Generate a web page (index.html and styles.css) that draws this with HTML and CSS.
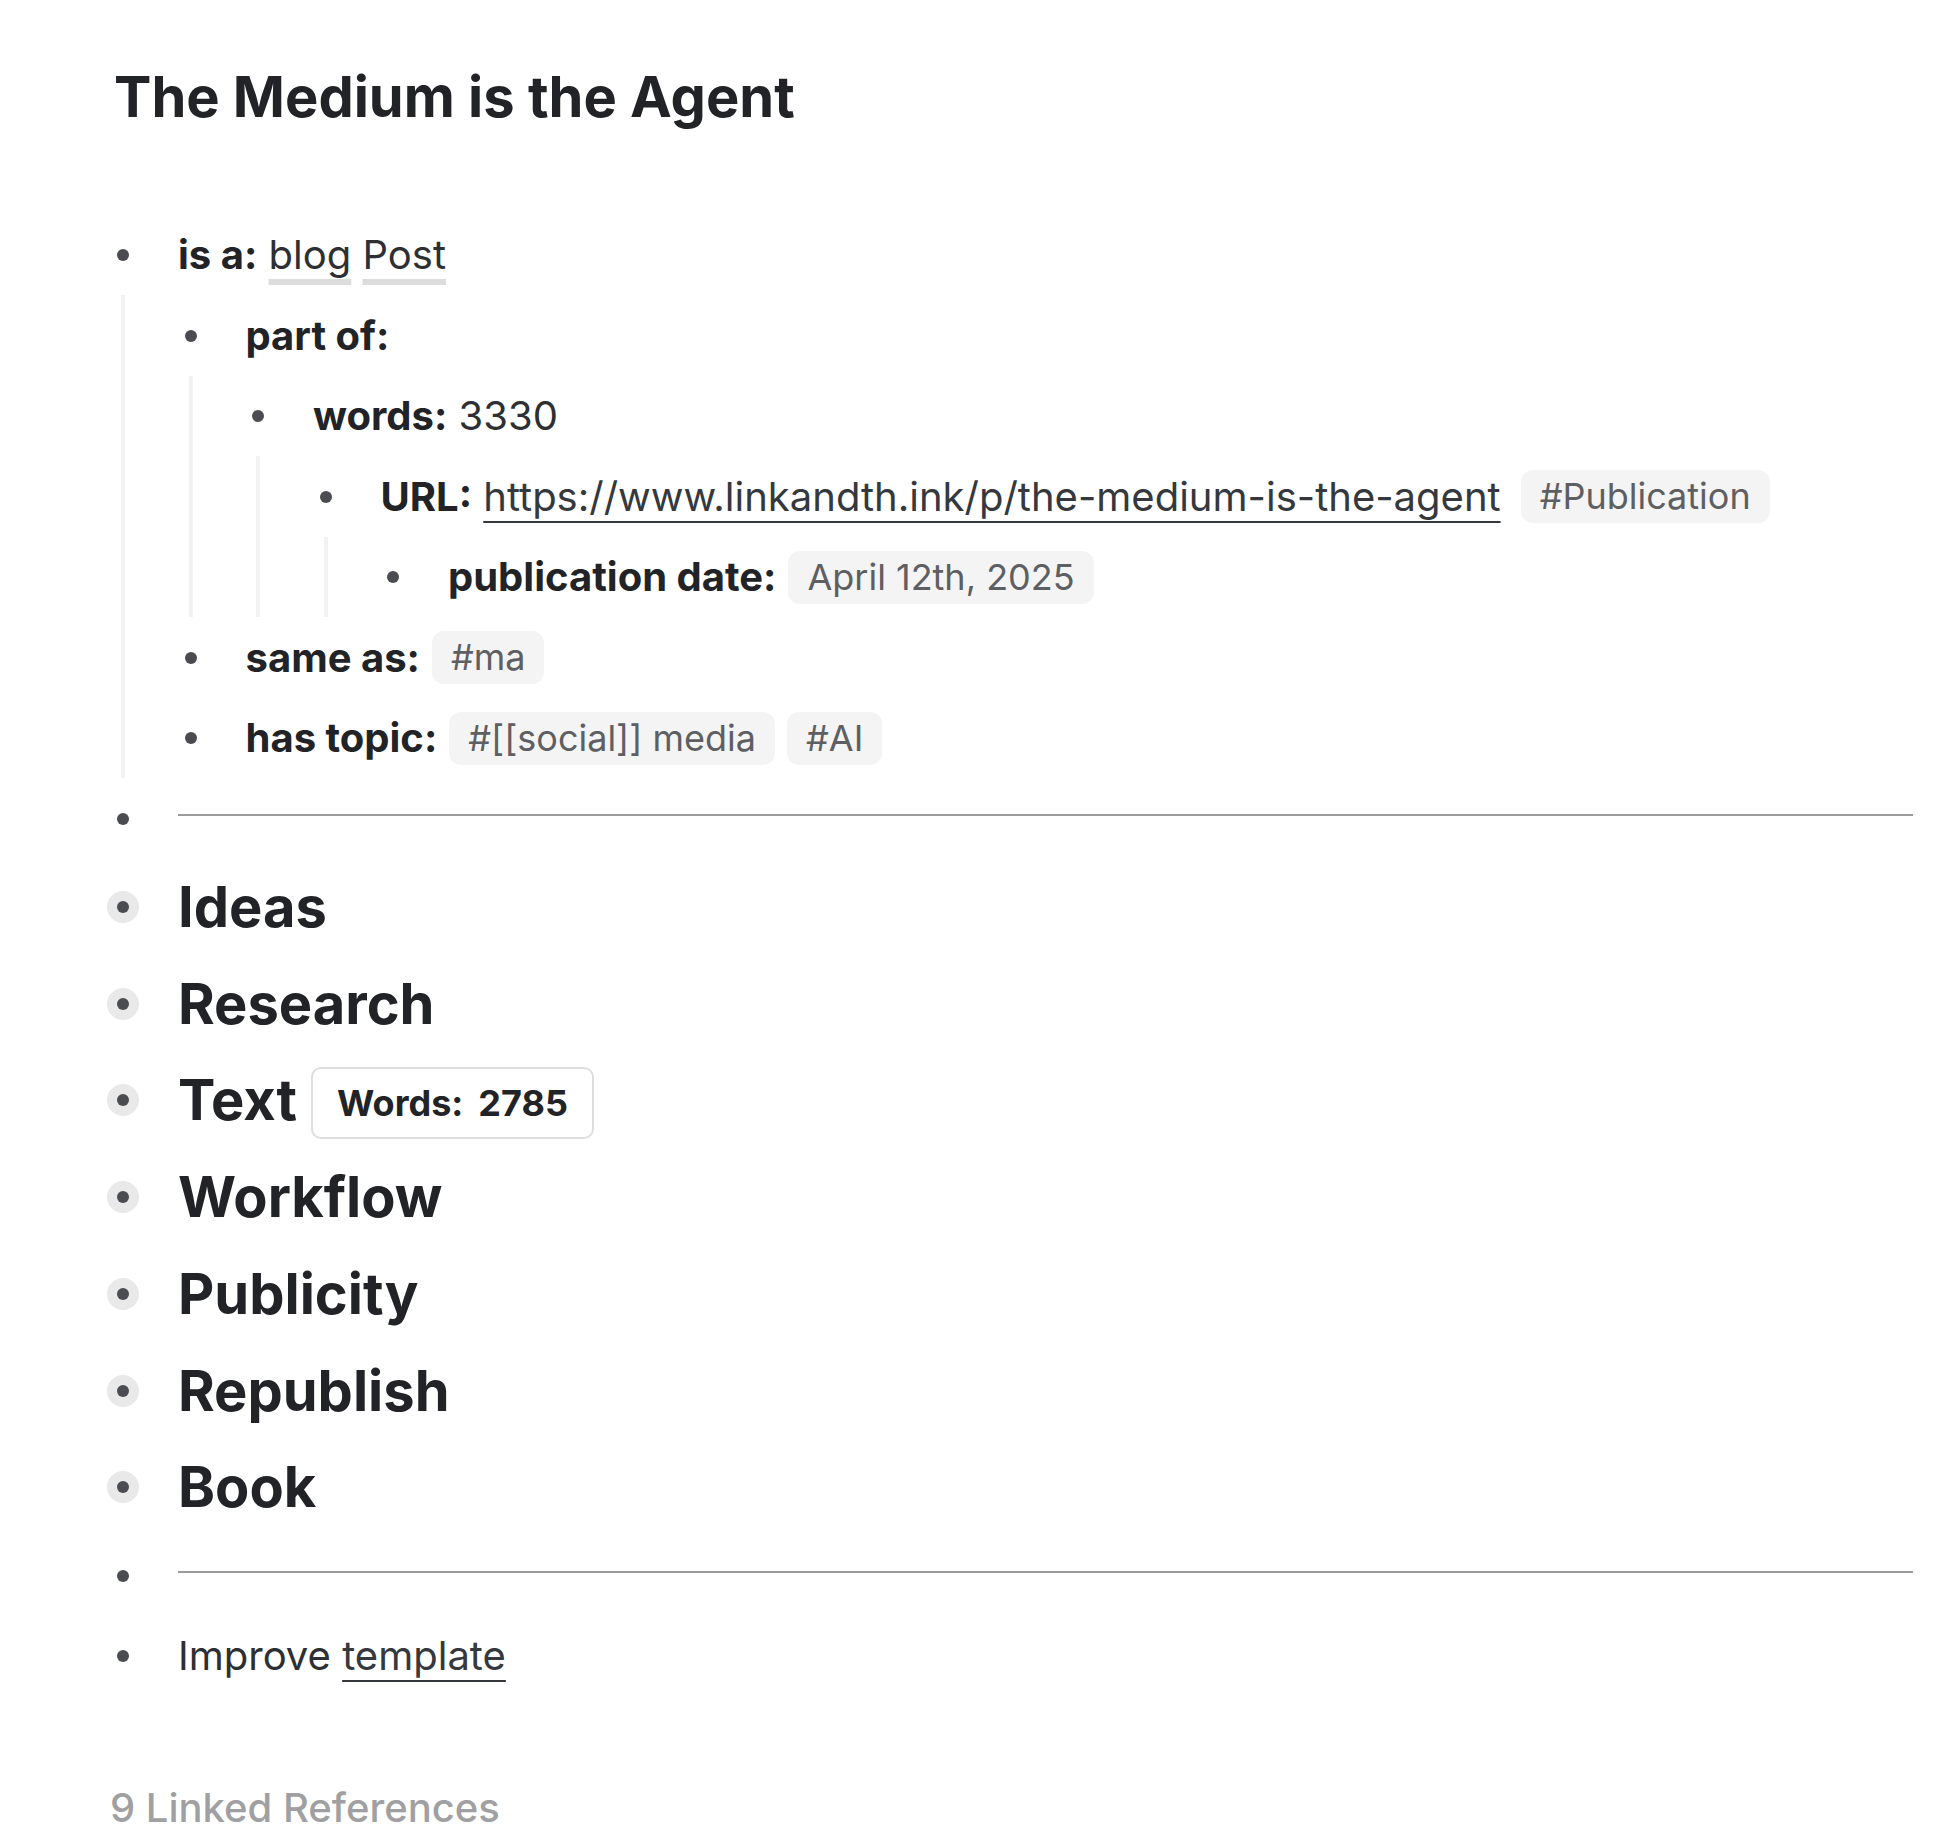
FILE: index.html
```html
<!DOCTYPE html>
<html lang="en">
<head>
<meta charset="utf-8">
<title>The Medium is the Agent</title>
<link rel="stylesheet" href="styles.css">
</head>
<body>
<div class="page">
  <h1 class="title">The Medium is the Agent</h1>

  <div class="blocks">
    <div class="block">
      <div class="row">
        <span class="bullet"><span class="dot"></span></span>
        <div class="content"><span class="line"><span class="key">is a:</span> <span class="ref">blog</span> <span class="ref">Post</span></span></div>
      </div>
      <div class="children">
        <div class="block">
          <div class="row">
            <span class="bullet"><span class="dot"></span></span>
            <div class="content"><span class="line"><span class="key">part of:</span></span></div>
          </div>
          <div class="children">
            <div class="block">
              <div class="row">
                <span class="bullet"><span class="dot"></span></span>
                <div class="content"><span class="line"><span class="key">words:</span> <span class="val">3330</span></span></div>
              </div>
              <div class="children">
                <div class="block">
                  <div class="row">
                    <span class="bullet"><span class="dot"></span></span>
                    <div class="content"><span class="line"><span class="key">URL:</span> <span class="link">https://www.linkandth.ink/p/the-medium-is-the-agent</span><span class="tag tag-wide">#Publication</span></span></div>
                  </div>
                  <div class="children">
                    <div class="block">
                      <div class="row">
                        <span class="bullet"><span class="dot"></span></span>
                        <div class="content"><span class="line"><span class="key">publication date:</span><span class="tag">April 12th, 2025</span></span></div>
                      </div>
                    </div>
                  </div>
                </div>
              </div>
            </div>
          </div>
        </div>
        <div class="block">
          <div class="row">
            <span class="bullet"><span class="dot"></span></span>
            <div class="content"><span class="line"><span class="key">same as:</span><span class="tag">#ma</span></span></div>
          </div>
        </div>
        <div class="block">
          <div class="row">
            <span class="bullet"><span class="dot"></span></span>
            <div class="content"><span class="line"><span class="key">has topic:</span><span class="tag">#[[social]] media</span><span class="tag">#AI</span></span></div>
          </div>
        </div>
      </div>
    </div>

    <div class="block">
      <div class="row">
        <span class="bullet"><span class="dot"></span></span>
        <div class="content"><div class="rule"></div></div>
      </div>
    </div>

    <div class="block collapsed">
      <div class="row heading-row">
        <span class="bullet"><span class="ring"><span class="dot"></span></span></span>
        <div class="content"><span class="heading">Ideas</span></div>
      </div>
    </div>
    <div class="block collapsed">
      <div class="row heading-row">
        <span class="bullet"><span class="ring"><span class="dot"></span></span></span>
        <div class="content"><span class="heading">Research</span></div>
      </div>
    </div>
    <div class="block collapsed">
      <div class="row heading-row">
        <span class="bullet"><span class="ring"><span class="dot"></span></span></span>
        <div class="content"><span class="heading">Text</span><span class="counter"><span>Words:</span><span>2785</span></span></div>
      </div>
    </div>
    <div class="block collapsed">
      <div class="row heading-row">
        <span class="bullet"><span class="ring"><span class="dot"></span></span></span>
        <div class="content"><span class="heading">Workflow</span></div>
      </div>
    </div>
    <div class="block collapsed">
      <div class="row heading-row">
        <span class="bullet"><span class="ring"><span class="dot"></span></span></span>
        <div class="content"><span class="heading">Publicity</span></div>
      </div>
    </div>
    <div class="block collapsed">
      <div class="row heading-row">
        <span class="bullet"><span class="ring"><span class="dot"></span></span></span>
        <div class="content"><span class="heading">Republish</span></div>
      </div>
    </div>
    <div class="block collapsed">
      <div class="row heading-row">
        <span class="bullet"><span class="ring"><span class="dot"></span></span></span>
        <div class="content"><span class="heading">Book</span></div>
      </div>
    </div>

    <div class="block">
      <div class="row">
        <span class="bullet"><span class="dot"></span></span>
        <div class="content"><div class="rule"></div></div>
      </div>
    </div>

    <div class="block">
      <div class="row">
        <span class="bullet"><span class="dot"></span></span>
        <div class="content"><span class="line"><span class="val">Improve</span> <span class="link">template</span></span></div>
      </div>
    </div>
  </div>

  <div class="refs">9 Linked References</div>
</div>
</body>
</html>
```

FILE: styles.css
```css
* { box-sizing: border-box; }

html, body {
  margin: 0;
  padding: 0;
  background: #ffffff;
}

body {
  font-family: Inter, "Noto Sans", "Liberation Sans", sans-serif;
  color: #222326;
}

.page {
  padding: 63px 38px 0 99px;
}

.title {
  margin: 0 0 0 15px;
  font-size: 56px;
  line-height: 68px;
  font-weight: 700;
  color: #222326;
}

.blocks {
  margin-top: 83.75px;
}

.row {
  display: flex;
  align-items: center;
  min-height: 80.5px;
}

.heading-row {
  min-height: 96.7px;
}

.bullet {
  flex: none;
  width: 48px;
  height: 48px;
  margin-right: 31px;
  display: flex;
  align-items: center;
  justify-content: center;
}

.dot {
  display: block;
  width: 12px;
  height: 12px;
  border-radius: 50%;
  background: #4b4c51;
}

.ring {
  display: flex;
  align-items: center;
  justify-content: center;
  width: 32px;
  height: 32px;
  border-radius: 50%;
  background: #e9e9ea;
}

.content {
  flex: 1;
  display: flex;
  align-items: center;
  font-size: 40px;
  line-height: 56px;
}

.line {
  display: block;
  white-space: nowrap;
}

.children {
  margin-left: 22px;
  border-left: 4px solid #f2f2f2;
  padding-left: 41.5px;
}

.key {
  font-weight: 700;
  color: #222326;
}

.val {
  font-weight: 400;
  color: #2e2f33;
}

.ref {
  font-weight: 400;
  color: #2e2f33;
  text-decoration: underline;
  text-decoration-color: #dcdcdc;
  text-decoration-thickness: 6px;
  text-underline-offset: 10px;
  text-decoration-skip-ink: none;
}

.link {
  font-weight: 400;
  color: #35383d;
  text-decoration: underline;
  text-decoration-color: #35383d;
  text-decoration-thickness: 2px;
  text-underline-offset: 10px;
  text-decoration-skip-ink: none;
}

.tag {
  display: inline-block;
  vertical-align: middle;
  height: 53px;
  line-height: 53px;
  padding: 0 19px;
  margin-left: 12px;
  margin-top: -6px;
  border-radius: 12px;
  background: #f4f4f4;
  color: #5e5f63;
  font-size: 36px;
  font-weight: 400;
}

.tag-wide {
  margin-left: 20px;
}

.rule {
  flex: 1;
  height: 2px;
  background: #9b9b9b;
  margin-bottom: 8px;
}

.heading {
  font-size: 56px;
  font-weight: 700;
  line-height: 68px;
  color: #222326;
}

.counter {
  display: inline-flex;
  align-items: center;
  gap: 15px;
  height: 72px;
  margin-left: 14px;
  margin-top: 6px;
  padding: 0 24px;
  border: 2px solid #dedede;
  border-radius: 10px;
  background: #ffffff;
  font-size: 36px;
  font-weight: 700;
  color: #222326;
}

.refs {
  margin: 87px 0 0 11px;
  font-size: 40px;
  line-height: 48px;
  font-weight: 500;
  color: #a0a0a2;
}
```
